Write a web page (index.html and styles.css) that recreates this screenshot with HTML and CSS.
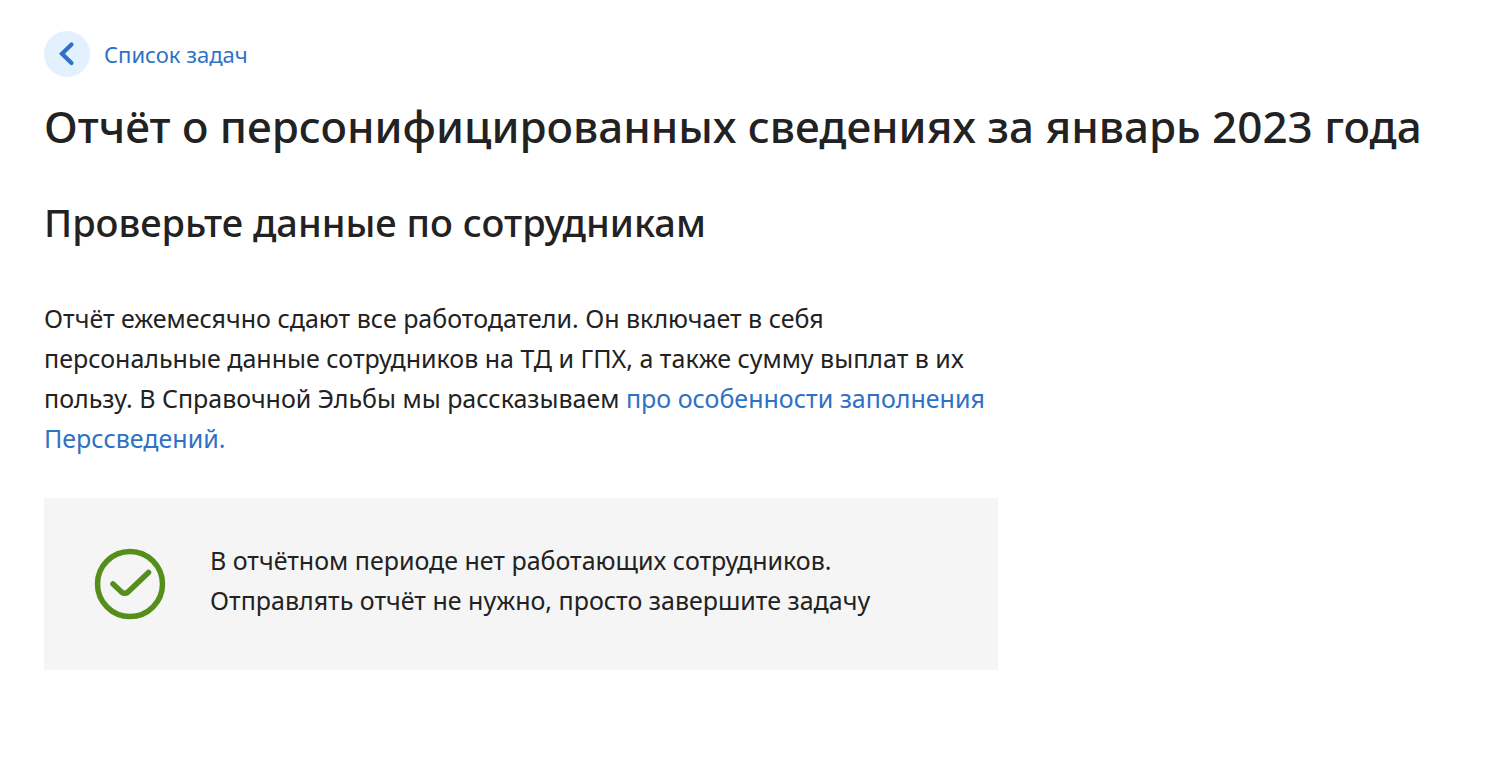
FILE: index.html
```html
<!DOCTYPE html>
<html lang="ru">
<head>
<meta charset="utf-8">
<meta name="viewport" content="width=device-width, initial-scale=1">
<title>Отчёт о персонифицированных сведениях</title>
<link rel="stylesheet" href="styles.css">
</head>
<body>
<main class="page">
  <a class="back" href="#">
    <span class="back-icon">
      <svg viewBox="0 0 46 46" width="46" height="46" aria-hidden="true"><path d="M27.500 13.500L18 22.700L27.500 32" fill="none" stroke="#2f71c5" stroke-width="4.200" stroke-linecap="round"/></svg>
    </span>
    <span>Список задач</span>
  </a>
  <h1 class="title">Отчёт о персонифицированных сведениях за январь 2023 года</h1>
  <h2 class="subtitle">Проверьте данные по сотрудникам</h2>
  <p class="intro">Отчёт ежемесячно сдают все работодатели. Он включает в себя<br>персональные данные сотрудников на ТД и ГПХ, а также сумму выплат в их<br>пользу. В Справочной Эльбы мы рассказываем <a href="#">про особенности заполнения<br>Перссведений.</a></p>
  <section class="notice">
    <svg class="notice-icon" viewBox="0 0 72 72" width="72" height="72" aria-hidden="true"><g fill="none" stroke="#568e1c" stroke-width="5.500"><circle cx="36" cy="36" r="32.500"/><path d="M19 36L27.500 44Q30.700 46.500 34 44L54.500 24.500" stroke-linecap="round" stroke-linejoin="round"/></g></svg>
    <p class="notice-text">В отчётном периоде нет работающих сотрудников.<br>Отправлять отчёт не нужно, просто завершите задачу</p>
  </section>
</main>
</body>
</html>
```
FILE: styles.css
```css
* { box-sizing: border-box; }
body { margin: 0; background: #fff; color: #222; font-family: "Noto Sans", "Open Sans", sans-serif; }
a { color: #2f71c5; text-decoration: none; }
.page { padding: 31px 44px; }
.back { display: inline-flex; align-items: center; gap: 14px; font-size: 22px; line-height: 46px; }
.back-icon { display: block; width: 46px; height: 46px; border-radius: 50%; background: #e3f1ff; }
.back-icon svg { display: block; }
.title { margin: 14px 0 0; font-size: 44px; line-height: 60px; font-weight: 500; }
.subtitle { margin: 40px 0 0; font-size: 38px; line-height: 52px; font-weight: 500; }
.intro { margin: 50px 0 0; font-size: 25px; line-height: 40px; }
.notice { display: flex; align-items: flex-start; gap: 44px; max-width: 954px; margin-top: 40px; padding: 42px 50px 50px; background: #f5f5f5; }
.notice-icon { flex: none; margin-top: 8px; }
.notice-text { margin: 0; font-size: 25px; line-height: 40px; }
```
